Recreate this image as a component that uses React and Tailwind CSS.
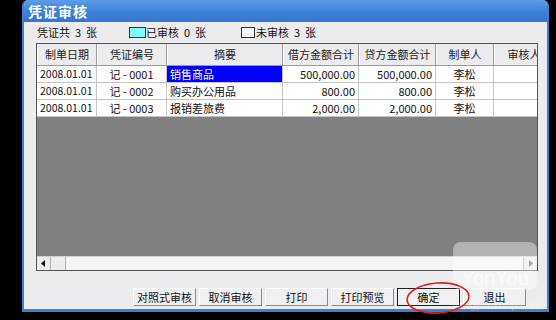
import React from 'react';

const font = "font-['Noto_Sans_CJK_SC',sans-serif]";

const cols = [
  { label: '制单日期', w: 'w-[60px]' },
  { label: '凭证编号', w: 'w-[70px]' },
  { label: '摘要', w: 'w-[116px]' },
  { label: '借方金额合计', w: 'w-[76px]' },
  { label: '贷方金额合计', w: 'w-[77px]' },
  { label: '制单人', w: 'w-[58px]' },
  { label: '审核人', w: 'w-[60px]' },
];

const rows = [
  { date: '2008.01.01', no: '记 - 0001', memo: '销售商品', debit: '500,000.00', credit: '500,000.00', maker: '李松' },
  { date: '2008.01.01', no: '记 - 0002', memo: '购买办公用品', debit: '800.00', credit: '800.00', maker: '李松' },
  { date: '2008.01.01', no: '记 - 0003', memo: '报销差旅费', debit: '2,000.00', credit: '2,000.00', maker: '李松' },
];

const buttons = ['对照式审核', '取消审核', '打印', '打印预览', '确定', '退出'];

const Cell = ({ w, className = '', children }) => (
  <div className={`${w} shrink-0 h-full flex items-center border-r border-[#c4c4c4] px-[3px] whitespace-pre ${className}`}>
    {children}
  </div>
);

export default function App() {
  return (
    <div className={`relative w-[556px] h-[320px] bg-black overflow-hidden ${font}`}>
      <div className="ml-[22px] w-[527px] h-[312px] flex flex-col bg-[#ecebee] border-x-2 border-b-[3px] border-[#3f7fd6] rounded-t-[6px] overflow-hidden">
        {/* title bar */}
        <div className="h-[22px] shrink-0 flex items-center px-[4px] bg-gradient-to-b from-[#5e9ee6] via-[#3f82d9] to-[#3575cf]">
          <span className="text-white text-[14px] font-bold tracking-[1px] leading-none">凭证审核</span>
        </div>

        {/* info row */}
        <div className="h-[21px] shrink-0 flex items-center pl-[13px] text-[11px] text-[#111] leading-none whitespace-pre">
          <span className="w-[92px]">凭证共  3  张</span>
          <span className="w-[17px] h-[11px] bg-[#80ffff] border border-[#333]"></span>
          <span className="w-[95px]">已审核  0  张</span>
          <span className="w-[14px] h-[11px] bg-white border border-[#333]"></span>
          <span className="ml-[1px]">未审核  3  张</span>
        </div>

        {/* grid */}
        <div className="ml-[12px] w-[502px] h-[228px] shrink-0 flex flex-col border border-[#555] bg-[#808080] overflow-hidden">
          <div className="h-[22px] shrink-0 flex bg-[#ecebee] border-b border-[#9a9a9a] text-[11px] text-[#222]">
            {cols.map((c) => (
              <div key={c.label} className={`${c.w} shrink-0 h-full flex items-center justify-center border-r border-[#9a9a9a] border-l border-l-white`}>
                {c.label}
              </div>
            ))}
          </div>
          {rows.map((r, i) => (
            <div key={r.no} className="h-[17px] shrink-0 flex bg-white border-b border-[#c4c4c4] text-[11px] text-[#111] leading-none">
              <Cell w="w-[60px]" className="text-[10.5px]">{r.date}</Cell>
              <Cell w="w-[70px]" className="justify-center">{r.no}</Cell>
              <Cell w="w-[116px]" className={i === 0 ? 'bg-[#0000ff] text-white' : ''}>{r.memo}</Cell>
              <Cell w="w-[76px]" className="justify-end">{r.debit}</Cell>
              <Cell w="w-[77px]" className="justify-end">{r.credit}</Cell>
              <Cell w="w-[58px]" className="justify-center">{r.maker}</Cell>
              <Cell w="w-[60px]"></Cell>
            </div>
          ))}
          <div className="flex-1"></div>
          {/* scrollbar */}
          <div className="h-[14px] shrink-0 flex bg-[#f4f4f6] border-t border-[#d0d0d0]">
            <div className="w-[14px] h-full flex items-center justify-center bg-[#ecebee] border-r border-[#b0b0b0]">
              <svg width="5" height="7" viewBox="0 0 5 7"><path d="M4 0 L0 3.5 L4 7 Z" fill="#111" /></svg>
            </div>
            <div className="w-[15px] h-full bg-[#ecebee] border-r border-[#b0b0b0]"></div>
            <div className="flex-1"></div>
            <div className="w-[14px] h-full flex items-center justify-center bg-[#ecebee] border-l border-[#b0b0b0]">
              <svg width="5" height="7" viewBox="0 0 5 7"><path d="M1 0 L5 3.5 L1 7 Z" fill="#666" /></svg>
            </div>
          </div>
        </div>

        {/* buttons */}
        <div className="mt-[17px] flex gap-[3px] pl-[109px]">
          {buttons.map((b) => (
            <div
              key={b}
              className={`w-[63px] h-[18px] flex items-center justify-center text-[11px] text-[#111] bg-[#f0eff2] border ${
                b === '确定'
                  ? 'border-[#222]'
                  : 'border-t-white border-l-white border-r-[#8a8a8a] border-b-[#8a8a8a]'
              }`}
            >
              {b}
            </div>
          ))}
        </div>
      </div>

      {/* YonYou watermark */}
      <div className="absolute left-[453px] top-[242px] w-[84px] h-[48px] rounded-[8px] bg-white/40 flex items-end justify-center pb-[2px]">
        <span className="text-[20px] leading-none text-white/60 font-['Liberation_Sans',sans-serif]">YonYou</span>
      </div>
      <div className="absolute left-[452px] top-[300px] text-[11px] leading-none text-white/30 font-['Liberation_Sans',sans-serif]">
        yongyoushop.com
      </div>

      {/* red ellipse around 确定 */}
      <svg className="absolute left-[402px] top-[279px]" width="72" height="38" viewBox="0 0 72 38">
        <ellipse cx="36" cy="19" rx="31" ry="15" fill="none" stroke="#e02020" strokeWidth="1.6" transform="rotate(-4 36 19)" />
      </svg>
    </div>
  );
}
